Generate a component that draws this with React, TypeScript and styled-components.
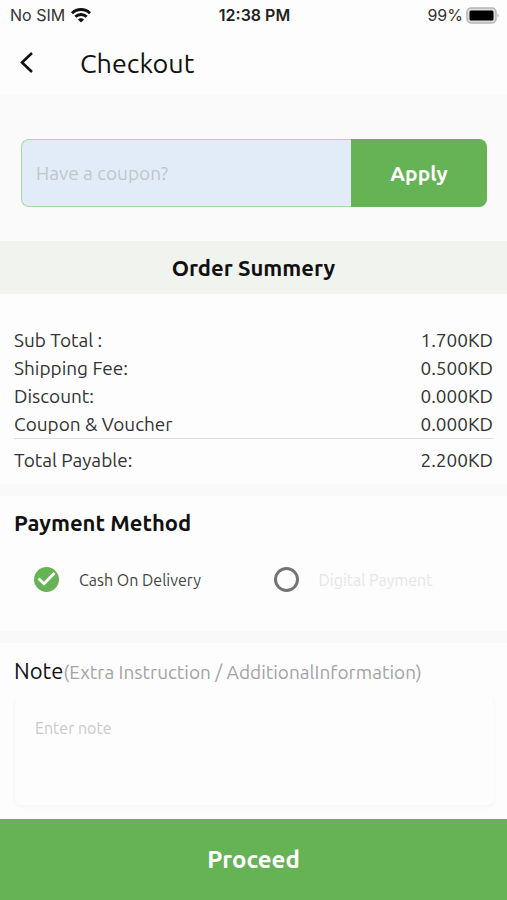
import React, { useState } from "react";
import styled, { createGlobalStyle } from "styled-components";

const green = "#66b355";

const GlobalStyle = createGlobalStyle`
  * { box-sizing: border-box; }
  body {
    margin: 0;
    background: #fdfdfd;
    color: #111;
    font-family: Ubuntu, "Noto Sans", sans-serif;
  }
  button, input, textarea { font-family: inherit; }
`;

const Page = styled.div`
  min-height: 100vh;
  display: flex;
  flex-direction: column;
`;

const StatusBar = styled.div`
  display: grid;
  grid-template-columns: 1fr auto 1fr;
  align-items: center;
  height: 30px;
  padding: 0 8px 0 10px;
  font: 400 16px/20px Inter, sans-serif;
  color: #333;
`;

const StatusGroup = styled.div<{ $end?: boolean }>`
  display: flex;
  align-items: center;
  gap: ${(p) => (p.$end ? 3 : 6)}px;
  justify-content: ${(p) => (p.$end ? "flex-end" : "flex-start")};
`;

const Clock = styled.time`
  font-weight: 600;
  color: #222;
`;

const Header = styled.header`
  display: flex;
  align-items: center;
  gap: 40px;
  height: 65px;
  padding: 0 14px;
`;

const BackButton = styled.button`
  display: flex;
  padding: 0;
  border: 0;
  background: none;
  cursor: pointer;
`;

const Title = styled.h1`
  margin: 0;
  font-size: 27px;
  line-height: 32px;
  font-weight: 400;
`;

const CouponForm = styled.form`
  display: flex;
  padding: 44px 20px 34px 21px;
  background: #fafafa;
`;

const CouponInput = styled.input`
  flex: 1;
  min-width: 0;
  height: 68px;
  padding: 0 14px;
  border: 1px solid #a9d7a6;
  border-right: 0;
  border-radius: 8px 0 0 8px;
  background: #e2ecf8;
  color: #333;
  font-size: 19px;
  &::placeholder { color: #c0c6c9; opacity: 1; }
`;

const ApplyButton = styled.button`
  width: 136px;
  border: 0;
  border-radius: 0 8px 8px 0;
  background: ${green};
  color: #fff;
  font-size: 21px;
  font-weight: 700;
  cursor: pointer;
`;

const SummaryTitle = styled.h2`
  margin: 0;
  padding: 14px;
  background: #f1f3ee;
  font-size: 22px;
  line-height: 25px;
  font-weight: 700;
  text-align: center;
`;

const Divider = styled.div`
  height: 12px;
  background: #f9f9f9;
`;

const Section = styled.section`
  padding: 14px;
`;

const Totals = styled.table`
  width: 100%;
  margin: 18px 0 -4px;
  border-collapse: collapse;
  font-size: 19px;
  line-height: 28px;
  color: #333;
`;

const Label = styled.th`
  padding: 0;
  font-weight: 400;
  text-align: left;
`;

const Amount = styled.td`
  padding: 0;
  text-align: right;
`;

const TotalRow = styled.tr`
  border-top: 1px solid #dedede;
  > * { padding-top: 7px; }
`;

const SectionTitle = styled.h2`
  margin: 0;
  font-size: 22px;
  line-height: 26px;
  font-weight: 700;
`;

const Options = styled.div`
  display: grid;
  grid-template-columns: 1fr 1fr;
  padding: 30px 0 24px 20px;
  margin-right: -20px;
`;

const Option = styled.label<{ $muted?: boolean }>`
  display: grid;
  grid-template-columns: 26px 1fr;
  align-items: center;
  column-gap: 19px;
  height: 27px;
  font-size: 16px;
  line-height: 20px;
  white-space: nowrap;
  color: ${(p) => (p.$muted ? "#e6e6e6" : "#444")};
  > svg, > input { grid-area: 1 / 1; }
  > svg { pointer-events: none; }
`;

const Radio = styled.input`
  appearance: none;
  width: 25px;
  height: 25px;
  margin: 0;
  border: 3px solid #757575;
  border-radius: 50%;
  &:checked {
    border-color: ${green};
    background: ${green};
  }
`;

const NoteLabel = styled.label`
  display: block;
  font-size: 22px;
  line-height: 26px;
  white-space: nowrap;
`;

const Hint = styled.span`
  font-size: 19px;
  color: #a3a3a3;
`;

const NoteSection = styled.section`
  flex: 1;
  padding: 15px 12px 12px 14px;
`;

const NoteInput = styled.textarea`
  display: block;
  width: 100%;
  height: 110px;
  margin-top: 11px;
  padding: 20px;
  border: 1px solid #f8f8f8;
  border-top-color: transparent;
  border-radius: 8px;
  background: #fdfdfd;
  box-shadow: 0 2px 2px #f8f8f8;
  font-size: 16px;
  line-height: 22px;
  resize: none;
  &::placeholder { color: #cacaca; opacity: 1; }
`;

const ProceedButton = styled.button`
  height: 81px;
  border: 0;
  background: ${green};
  color: #fff;
  font-size: 24px;
  font-weight: 700;
  cursor: pointer;
`;

const WifiIcon = () => (
  <svg width="20" height="15" viewBox="0 0 20 15" aria-hidden="true">
    <g fill="none" stroke="#111" strokeWidth="2.9">
      <path d="M1 5.3C6 .3 14 .3 19 5.3" />
      <path d="M4.3 8.8c3.2-3.1 8.2-3.1 11.4 0" />
    </g>
    <path fill="#111" d="M10 14.6 6.9 11.5c1.7-1.6 4.5-1.6 6.2 0z" />
  </svg>
);

const BatteryIcon = () => (
  <svg width="33" height="17" viewBox="0 0 33 17" aria-hidden="true">
    <rect x="1" y="1" width="29" height="15" rx="4" fill="#ddd" stroke="#b5b5b5" strokeWidth="1.5" />
    <rect x="3.5" y="3.5" width="24" height="10" rx="1.5" fill="#000" />
    <path d="M31.5 6.5c1.4.7 1.4 3.3 0 4z" fill="#aaa" />
  </svg>
);

const BackIcon = () => (
  <svg width="26" height="26" viewBox="0 0 26 26" aria-hidden="true">
    <path d="M18 3 8 12.5 18 22" fill="none" stroke="#111" strokeWidth="2.6" />
  </svg>
);

const CheckIcon = () => (
  <svg width="25" height="25" viewBox="0 0 25 25" aria-hidden="true">
    <path d="m4.5 11.5 5.5 5.2L20.5 6" fill="none" stroke="#fff" strokeWidth="2.8" />
  </svg>
);

const lines = [
  ["Sub Total :", "1.700KD"],
  ["Shipping Fee:", "0.500KD"],
  ["Discount:", "0.000KD"],
  ["Coupon & Voucher", "0.000KD"],
];

export default function App() {
  const [coupon, setCoupon] = useState("");
  const [note, setNote] = useState("");

  return (
    <Page>
      <GlobalStyle />
      <StatusBar>
        <StatusGroup>
          No SIM
          <WifiIcon />
        </StatusGroup>
        <Clock>12:38 PM</Clock>
        <StatusGroup $end>
          99%
          <BatteryIcon />
        </StatusGroup>
      </StatusBar>
      <Header>
        <BackButton type="button" aria-label="Back">
          <BackIcon />
        </BackButton>
        <Title>Checkout</Title>
      </Header>
      <CouponForm onSubmit={(e) => e.preventDefault()}>
        <CouponInput
          aria-label="Coupon code"
          placeholder="Have a coupon?"
          value={coupon}
          onChange={(e) => setCoupon(e.target.value)}
        />
        <ApplyButton type="submit">Apply</ApplyButton>
      </CouponForm>
      <SummaryTitle>Order Summery</SummaryTitle>
      <Section>
        <Totals>
          <tbody>
            {lines.map(([label, amount]) => (
              <tr key={label}>
                <Label scope="row">{label}</Label>
                <Amount>{amount}</Amount>
              </tr>
            ))}
            <TotalRow>
              <Label scope="row">Total Payable:</Label>
              <Amount>2.200KD</Amount>
            </TotalRow>
          </tbody>
        </Totals>
      </Section>
      <Divider />
      <Section>
        <SectionTitle id="payment-title">Payment Method</SectionTitle>
        <Options role="radiogroup" aria-labelledby="payment-title">
          <Option>
            <Radio type="radio" name="payment" value="cash" defaultChecked />
            <CheckIcon />
            Cash On Delivery
          </Option>
          <Option $muted>
            <Radio type="radio" name="payment" value="digital" disabled />
            Digital Payment
          </Option>
        </Options>
      </Section>
      <Divider />
      <NoteSection>
        <NoteLabel htmlFor="note">
          Note<Hint>(Extra Instruction / AdditionalInformation)</Hint>
        </NoteLabel>
        <NoteInput
          id="note"
          placeholder="Enter note"
          value={note}
          onChange={(e) => setNote(e.target.value)}
        />
      </NoteSection>
      <ProceedButton type="button">Proceed</ProceedButton>
    </Page>
  );
}
